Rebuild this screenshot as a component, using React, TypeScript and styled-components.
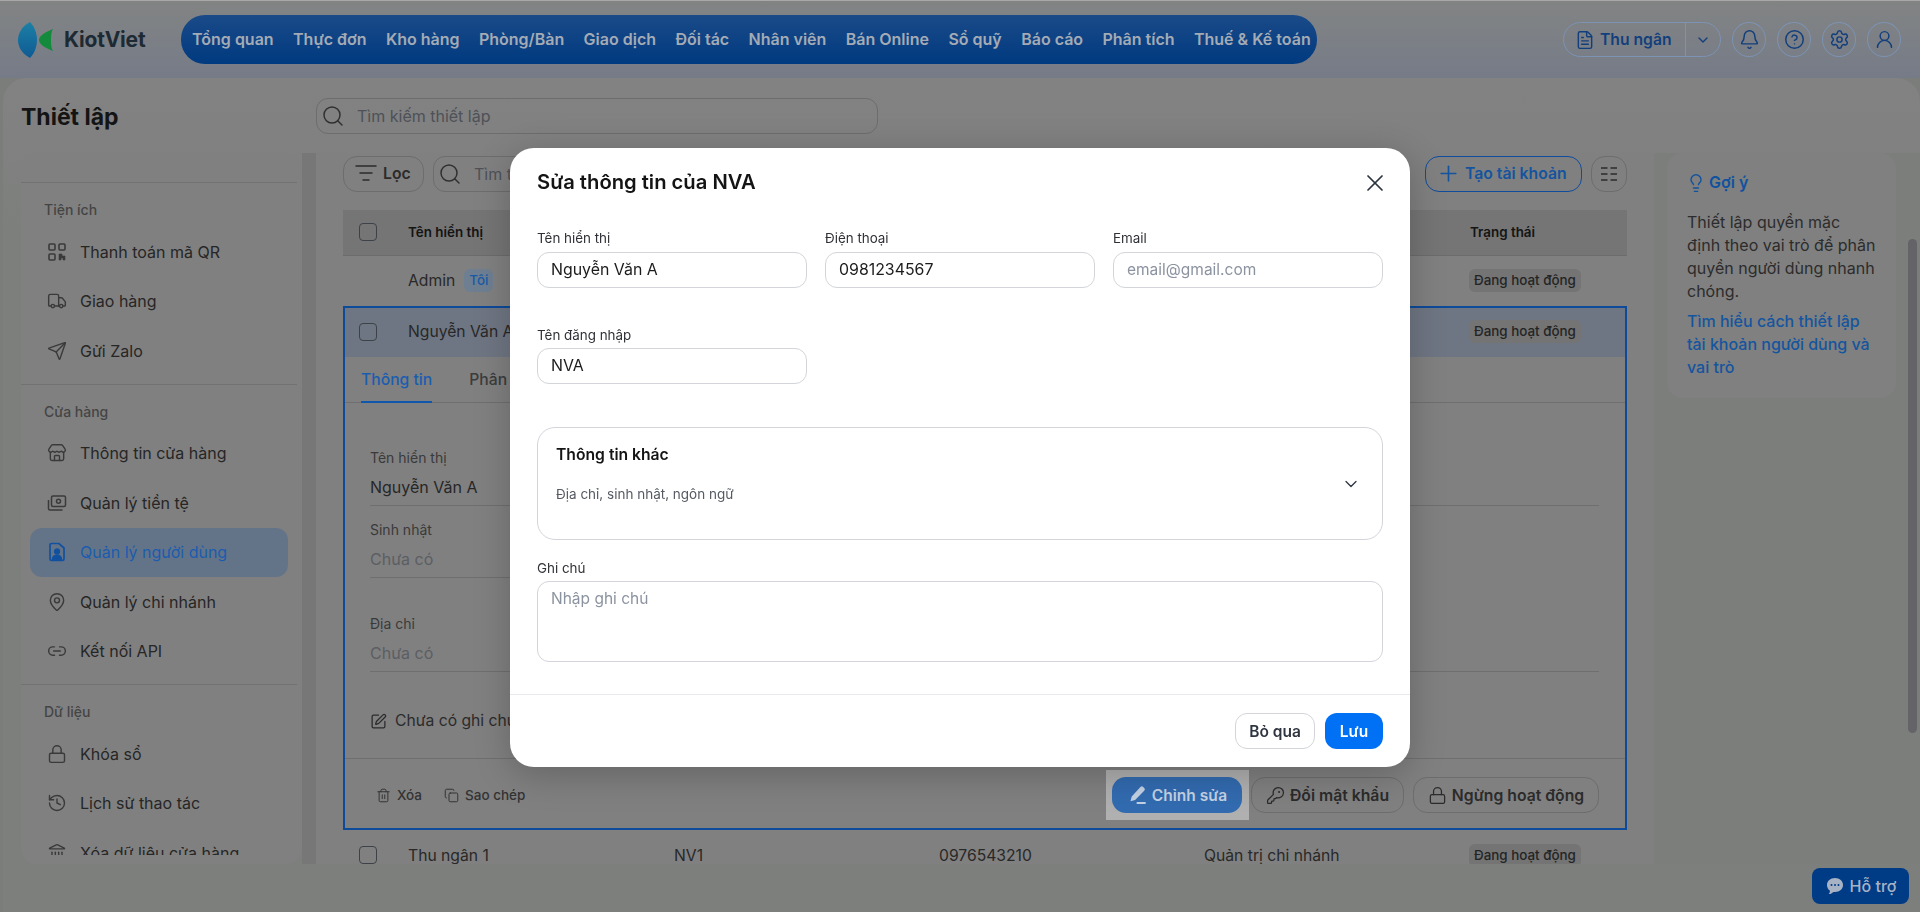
import React from "react";
import styled, { createGlobalStyle } from "styled-components";
import {
  Bell,
  ChevronDown,
  CircleHelp,
  Copy,
  FileText,
  History,
  KeyRound,
  Landmark,
  Lightbulb,
  Link2,
  ListFilter,
  Lock,
  MapPin,
  Plus,
  Search,
  Send,
  Settings,
  SquarePen,
  Store,
  Trash2,
  Truck,
  UserRound,
  X,
} from "lucide-react";

const GlobalStyle = createGlobalStyle`
  html, body {
    margin: 0;
    height: 100%;
    overflow: hidden;
    font-family: Inter, "Noto Sans", sans-serif;
  }
  * { box-sizing: border-box; }
`;

const Page = styled.div`
  height: 100vh;
  display: flex;
  flex-direction: column;
  overflow: hidden;
  background: linear-gradient(#828483, #767b88 78px, #7b7d7b 78px);
`;

const TopBar = styled.header`
  height: 78px;
  flex: none;
  display: flex;
  align-items: center;
  padding: 1px 19px 0 18px;
  box-shadow: inset 0 1px 0 #a8a8a8;
`;

const Brand = styled.div`
  width: 163px;
  flex: none;
  display: flex;
  align-items: center;
  gap: 10px;
  font-size: 21px;
  font-weight: 700;
  letter-spacing: -0.2px;
  color: #1d2a33;
`;

const Nav = styled.nav`
  width: 1136px;
  height: 49px;
  display: flex;
  align-items: center;
  gap: 19.4px;
  padding: 0 0 2px 11px;
  border-radius: 24px;
  background: linear-gradient(#1a4a88, #003a80);
`;

const NavLink = styled.a`
  font-size: 16px;
  font-weight: 600;
  color: #a4abb5;
  white-space: nowrap;
`;

const TopActions = styled.div`
  margin-left: auto;
  display: flex;
  align-items: center;
  gap: 11px;
`;

const RoleSwitch = styled.div`
  height: 35px;
  width: 158px;
  display: flex;
  align-items: center;
  border: 1px solid #7c93b3;
  border-radius: 18px;
  color: #123f7c;
  font-size: 15.7px;
  font-weight: 600;
`;

const RoleName = styled.span`
  flex: 1;
  height: 100%;
  display: flex;
  align-items: center;
  gap: 5px;
  padding-left: 11px;
  border-right: 1px solid #7c93b3;
`;

const RoleCaret = styled.span`
  width: 34px;
  display: flex;
  justify-content: center;
`;

const RoundButton = styled.button`
  width: 34px;
  height: 35px;
  padding: 0;
  display: flex;
  align-items: center;
  justify-content: center;
  border: 1px solid #7c93b3;
  border-radius: 50%;
  background: transparent;
  color: #123f7c;
`;

const Panel = styled.main`
  flex: 1;
  min-height: 0;
  margin-left: 3px;
  display: flex;
  flex-direction: column;
  border-radius: 24px 24px 0 0;
  background: linear-gradient(#828282, #7d7f7d 150px);
`;

const PanelHead = styled.div`
  height: 75px;
  flex: none;
  display: flex;
  align-items: center;
  padding: 0 0 0 18px;
`;

const PageTitle = styled.h1`
  width: 295px;
  margin: 2px 0 0;
  font-size: 23px;
  font-weight: 700;
  color: #141414;
`;

const SearchBox = styled.div<{ $width: number }>`
  width: ${(p) => p.$width}px;
  height: 36px;
  flex: none;
  display: flex;
  align-items: center;
  gap: 12px;
  padding: 0 4px;
  border: 1px solid #6d6d6d;
  border-radius: 12px;
  font-size: 16px;
  color: #4e5158;
  white-space: nowrap;
  overflow: hidden;
`;

const SearchIcon = styled(Search)`
  flex: none;
  color: #303030;
`;

const PanelBody = styled.div`
  height: 711px;
  flex: none;
  display: flex;
  overflow: hidden;
`;

const SideColumn = styled.aside`
  width: 295px;
  margin-left: 18px;
  flex: none;
  padding-right: 14px;
  background: linear-gradient(to right, transparent 281px, #777777 281px);
`;

const SideCard = styled.div`
  height: 100%;
  padding: 29px 5px 9px 0;
  border-radius: 16px;
  background: #808080;
`;

const SideScroll = styled.div`
  height: 100%;
  overflow: hidden;
`;

const SideGroup = styled.section`
  padding-bottom: 8px;
  border-top: 1px solid #727272;
`;

const SideLabel = styled.div`
  height: 20px;
  margin: 17px 0 7px 23px;
  font-size: 14px;
  line-height: 20px;
  font-weight: 500;
  color: #454545;
`;

const SideItem = styled.a<{ $active?: boolean }>`
  height: 49.5px;
  margin: 0 9px;
  display: flex;
  align-items: center;
  gap: 13px;
  padding-left: 17px;
  border-radius: 12px;
  font-size: 16px;
  color: ${(p) => (p.$active ? "#1b5cae" : "#262626")};
  background: ${(p) => (p.$active ? "#647488" : "transparent")};
  svg {
    flex: none;
    color: ${(p) => (p.$active ? "#11519f" : "#3a3a3a")};
  }
`;

const Content = styled.section`
  width: 1338px;
  flex: none;
  padding: 3px 27px 0;
  background: #808080;
  overflow: hidden;
`;

const Toolbar = styled.div`
  height: 36px;
  display: flex;
  align-items: center;
  gap: 9px;
  margin-bottom: 18px;
`;

const GhostButton = styled.button`
  height: 36px;
  display: flex;
  align-items: center;
  gap: 5px;
  padding: 0 0 2px 10px;
  border: 1px solid #6d6d6d;
  border-radius: 14px;
  background: transparent;
  font: 600 15.75px Inter, sans-serif;
  color: #2b2b2b;
  white-space: nowrap;
`;

const FilterButton = styled(GhostButton)`
  width: 81px;
`;

const CreateButton = styled(GhostButton)`
  margin-left: auto;
  width: 157px;
  gap: 4px;
  border-color: #0f4c9c;
  color: #14549f;
`;

const SquareButton = styled(GhostButton)`
  width: 36px;
  padding: 0;
  justify-content: center;
`;

const TableRow = styled.div<{ $head?: boolean; $raised?: boolean; $height: number }>`
  height: ${(p) => p.$height}px;
  display: grid;
  grid-template-columns: 65px 266px 265px 265px 266px 1fr;
  align-items: center;
  padding-bottom: ${(p) => (p.$raised ? 2 : 0)}px;
  font-size: ${(p) => (p.$head ? 13.4 : 15.7)}px;
  font-weight: ${(p) => (p.$head ? 600 : 400)};
  color: ${(p) => (p.$head ? "#141414" : "#282828")};
  background: ${(p) => (p.$head ? "#757575" : "transparent")};
  border-bottom: ${(p) => (p.$head ? "1px solid #6c6c6c" : "none")};
`;

const SelectedHead = styled(TableRow)`
  grid-template-columns: 63px 266px 265px 265px 266px 1fr;
  background: #6f7683;
`;

const Check = styled.span`
  width: 18px;
  height: 18px;
  margin-left: 16px;
  display: block;
  border: 1px solid #3d4148;
  border-radius: 4px;
`;

const SelectedCheck = styled(Check)`
  margin-left: 14px;
`;

const NameCell = styled.span`
  display: flex;
  align-items: center;
  gap: 9px;
`;

const Chip = styled.span`
  padding: 3px 5px;
  border-radius: 6px;
  background: #6f7f92;
  font-size: 13.4px;
  line-height: 17px;
  font-weight: 500;
  color: #1a5aa5;
`;

const StatusPill = styled.span`
  justify-self: start;
  margin-left: -1px;
  padding: 3px 5px;
  border-radius: 6px;
  background: #747474;
  font-size: 13.4px;
  line-height: 17px;
  font-weight: 500;
  color: #242424;
`;

const SelectedBox = styled.div`
  border: 2px solid #0d4a99;
`;

const Tabs = styled.div`
  height: 46px;
  display: flex;
  gap: 37px;
  padding-left: 16px;
  border-bottom: 1px solid #6f6f6f;
`;

const Tab = styled.a<{ $active?: boolean }>`
  height: 46px;
  display: flex;
  align-items: center;
  font-size: 15.7px;
  font-weight: 500;
  color: ${(p) => (p.$active ? "#1a5db0" : "#3c3c3c")};
  border-bottom: 2px solid ${(p) => (p.$active ? "#0f57ad" : "transparent")};
`;

const DetailPane = styled.div`
  height: 355px;
  padding: 45px 0 0 25px;
`;

const DetailField = styled.div<{ $gap: number; $half?: boolean }>`
  width: ${(p) => (p.$half ? 600 : 1229)}px;
  height: 58px;
  margin-bottom: ${(p) => p.$gap}px;
  border-bottom: 1px solid #6f6f6f;
`;

const DetailLabel = styled.div`
  height: 20px;
  font-size: 14px;
  line-height: 20px;
  color: #3a3a3a;
`;

const DetailValue = styled.div<{ $muted?: boolean }>`
  margin-top: 8px;
  font-size: 16px;
  line-height: 22px;
  color: ${(p) => (p.$muted ? "#5b5e63" : "#272727")};
`;

const NoteLine = styled.div`
  margin-top: 39px;
  display: flex;
  align-items: center;
  gap: 8px;
  font-size: 15.7px;
  line-height: 20px;
  color: #2b2b2b;
`;

const ActionBar = styled.div`
  height: 70px;
  display: flex;
  align-items: center;
  padding: 3px 26px 0 31px;
  border-top: 1px solid #6f6f6f;
`;

const TextAction = styled.span`
  display: flex;
  align-items: center;
  gap: 6px;
  margin-right: 22px;
  font-size: 13.5px;
  font-weight: 500;
  color: #333333;
`;

const Spotlight = styled.div`
  margin: 0 2px 0 auto;
  padding: 7px 7px 7px 6px;
  background: #b0b0b0;
`;

const EditButton = styled.button`
  width: 130px;
  height: 36px;
  display: flex;
  align-items: center;
  justify-content: center;
  gap: 4px;
  border: 0;
  border-radius: 14px;
  background: #326bb0;
  font: 600 15.5px Inter, sans-serif;
  color: #c3d1e4;
`;

const OutlineAction = styled(GhostButton)<{ $width: number }>`
  width: ${(p) => p.$width}px;
  margin-left: ${(p) => (p.$width > 160 ? 9 : 0)}px;
  padding: 0;
  justify-content: center;
`;

const HintColumn = styled.aside`
  flex: 1;
  padding: 0 24px 0 13px;
  background: #7c7e7c;
`;

const HintCard = styled.div`
  height: 245px;
  padding: 17px 19px 0 20px;
  border-radius: 16px;
  background: #808080;
  font-size: 16px;
  line-height: 23px;
  color: #2c2c2c;
`;

const HintTitle = styled.div`
  display: flex;
  align-items: center;
  gap: 3px;
  margin: 1px 0 17px -1px;
  font-weight: 600;
  color: #11529f;
`;

const HintLink = styled.a`
  display: block;
  margin-top: 7px;
  font-weight: 500;
  color: #14559f;
`;

const Scrollbar = styled.div`
  position: fixed;
  top: 239px;
  right: 3px;
  width: 9px;
  height: 494px;
  border-radius: 5px;
  background: #646468;
`;

const SupportButton = styled.button`
  position: fixed;
  right: 11px;
  bottom: 8px;
  width: 97px;
  height: 36px;
  display: flex;
  align-items: center;
  justify-content: center;
  gap: 5px;
  border: 0;
  border-radius: 8px;
  background: #003c85;
  font: 500 16px Inter, sans-serif;
  color: #a7b2c4;
`;

const Backdrop = styled.div`
  position: fixed;
  inset: 0;
  display: flex;
  justify-content: center;
  align-items: flex-start;
  padding-top: 148px;
`;

const Modal = styled.div`
  width: 900px;
  height: 619px;
  display: flex;
  flex-direction: column;
  border-radius: 24px;
  background: #ffffff;
  box-shadow: 0 8px 36px rgba(0, 0, 0, 0.22);
`;

const ModalHead = styled.div`
  height: 82px;
  flex: none;
  display: flex;
  align-items: flex-start;
  justify-content: space-between;
  padding: 20px 27px 0;
`;

const ModalTitle = styled.h2`
  margin: 0;
  font-size: 20.2px;
  line-height: 28px;
  font-weight: 600;
  color: #141414;
`;

const CloseButton = styled.button`
  width: 28px;
  height: 28px;
  margin: 1px -6px 0 0;
  padding: 0;
  display: flex;
  align-items: center;
  justify-content: center;
  border: 0;
  background: transparent;
  color: #2c3440;
`;

const ModalBody = styled.div`
  flex: 1;
  padding: 0 27px;
`;

const FieldGrid = styled.div`
  display: grid;
  grid-template-columns: repeat(3, 270px);
  gap: 18px;
  margin-bottom: 39px;
`;

const Field = styled.label`
  display: block;
`;

const FieldLabel = styled.div<{ $gap?: number }>`
  height: 16px;
  margin-bottom: ${(p) => p.$gap ?? 6}px;
  font-size: 13.4px;
  line-height: 16px;
  color: #2f3136;
`;

const Input = styled.input`
  width: 100%;
  height: 36px;
  padding: 0 13px 2px;
  border: 1px solid #d3d5da;
  border-radius: 12px;
  outline: none;
  font: 400 15.9px Inter, sans-serif;
  color: #1c1c1c;
  &::placeholder {
    color: #8c93a0;
    font-size: 15.5px;
  }
`;

const Accordion = styled.div`
  height: 113px;
  margin: 43px 0 20px;
  display: flex;
  align-items: center;
  justify-content: space-between;
  padding: 0 21px 0 18px;
  border: 1px solid #d3d5da;
  border-radius: 18px;
`;

const AccordionText = styled.div`
  align-self: flex-start;
  padding-top: 16px;
`;

const AccordionTitle = styled.div`
  margin-bottom: 18px;
  font-size: 15.7px;
  line-height: 22px;
  font-weight: 600;
  color: #141414;
`;

const AccordionHint = styled.div`
  font-size: 13.5px;
  line-height: 20px;
  color: #555a63;
`;

const NoteArea = styled.textarea`
  width: 100%;
  height: 81px;
  display: block;
  padding: 6px 13px;
  resize: none;
  border: 1px solid #d3d5da;
  border-radius: 12px;
  outline: none;
  font: 400 15.5px/22px Inter, sans-serif;
  &::placeholder {
    color: #8c93a0;
  }
`;

const ModalFoot = styled.div`
  height: 73px;
  flex: none;
  display: flex;
  justify-content: flex-end;
  align-items: center;
  gap: 10px;
  padding: 0 27px;
  border-top: 1px solid #e8e9ec;
`;

const CancelButton = styled.button`
  width: 80px;
  height: 36px;
  border: 1px solid #d3d5da;
  border-radius: 12px;
  background: #ffffff;
  font: 600 15.5px Inter, sans-serif;
  color: #2f3540;
`;

const SaveButton = styled.button`
  width: 58px;
  height: 36px;
  border: 0;
  border-radius: 12px;
  background: #0070f4;
  font: 600 15.5px Inter, sans-serif;
  color: #ffffff;
`;

const LogoMark = () => (
  <svg width="36" height="36" viewBox="0 0 36 36">
    <defs>
      <linearGradient id="lens" x1="0" y1="0" x2="0" y2="1">
        <stop offset="0" stopColor="#1c80a5" />
        <stop offset="1" stopColor="#0e5a94" />
      </linearGradient>
    </defs>
    <path d="M12 0C3 5 0 12 0 18s3 13 12 18c4-4 7-11 7-18S16 4 12 0z" fill="url(#lens)" />
    <path d="M35 7c-8 3-14 7-14 11s6 8 14 11c-2-3-2-7-2-11s0-8 2-11z" fill="#148a3c" />
  </svg>
);

const QrIcon = () => (
  <svg width="20" height="20" viewBox="0 0 20 20" fill="none" stroke="currentColor" strokeWidth="1.6">
    <rect x="2" y="2" width="6" height="6" rx="1" />
    <rect x="12" y="2" width="6" height="6" rx="1" />
    <rect x="2" y="12" width="6" height="6" rx="1" />
    <path d="M12 18v-6h3v2h3v4h-2v-2h-2v2z" fill="currentColor" strokeWidth="0.6" />
  </svg>
);

const MoneyIcon = () => (
  <svg width="20" height="20" viewBox="0 0 20 20" fill="none" stroke="currentColor" strokeWidth="1.5">
    <rect x="4.5" y="3" width="14" height="10.5" rx="1.5" />
    <circle cx="11.5" cy="8.2" r="2" />
    <path d="M1.5 7v8.500a1.500 1.500 0 0 0 1.500 1.500h12.500" />
  </svg>
);

const UserFileIcon = () => (
  <svg width="20" height="20" viewBox="0 0 20 20" fill="none" stroke="currentColor" strokeWidth="1.7">
    <path d="M3 3a1.500 1.500 0 0 1 1.500-1.500H12L17 6v11a1.500 1.500 0 0 1-1.500 1.500h-11A1.500 1.500 0 0 1 3 17z" />
    <circle cx="10" cy="9.500" r="2.300" fill="currentColor" />
    <path d="M5.500 17.500c.3-3 2-4.200 4.500-4.200s4.200 1.200 4.500 4.200z" fill="currentColor" />
  </svg>
);

const ColumnsIcon = () => (
  <svg width="18" height="18" viewBox="0 0 18 18" stroke="currentColor" strokeWidth="1.5">
    <path d="M1 3h6.500M10.500 3H17M1 9h6.500M10.500 9H17M1 15h6.500M10.500 15H17" />
  </svg>
);

const PenLineIcon = () => (
  <svg width="21" height="21" viewBox="0 0 20 20" fill="currentColor">
    <path d="M12.800 1.800a1.800 1.800 0 0 1 2.600 0l1 1a1.800 1.800 0 0 1 0 2.600l-8.700 8.800-4.400 1.300 1.200-4.600z" />
    <rect x="9" y="16.300" width="9" height="1.700" rx="0.800" />
  </svg>
);

const ChatIcon = () => (
  <svg width="20" height="20" viewBox="0 0 20 20">
    <path d="M10 2c4.700 0 8 3 8 7s-3.300 7-8 7c-.6 0-1.100 0-1.600-.1C7 17.300 5.300 18.200 3.800 18c.8-.9 1.200-2 1.200-3.200C3.100 13.500 2 11.400 2 9c0-4 3.300-7 8-7z" fill="currentColor" />
    <circle cx="6.500" cy="9" r="1" fill="#003c85" />
    <circle cx="10" cy="9" r="1" fill="#003c85" />
    <circle cx="13.500" cy="9" r="1" fill="#003c85" />
  </svg>
);

const navItems = [
  "Tổng quan",
  "Thực đơn",
  "Kho hàng",
  "Phòng/Bàn",
  "Giao dịch",
  "Đối tác",
  "Nhân viên",
  "Bán Online",
  "Sổ quỹ",
  "Báo cáo",
  "Phân tích",
  "Thuế & Kế toán",
];

const sideGroups = [
  {
    label: "Tiện ích",
    items: [
      { text: "Thanh toán mã QR", icon: <QrIcon /> },
      { text: "Giao hàng", icon: <Truck size={20} strokeWidth={1.7} /> },
      { text: "Gửi Zalo", icon: <Send size={20} strokeWidth={1.7} /> },
    ],
  },
  {
    label: "Cửa hàng",
    items: [
      { text: "Thông tin cửa hàng", icon: <Store size={20} strokeWidth={1.7} /> },
      { text: "Quản lý tiền tệ", icon: <MoneyIcon /> },
      { text: "Quản lý người dùng", icon: <UserFileIcon />, active: true },
      { text: "Quản lý chi nhánh", icon: <MapPin size={20} strokeWidth={1.7} /> },
      { text: "Kết nối API", icon: <Link2 size={20} strokeWidth={1.7} /> },
    ],
  },
  {
    label: "Dữ liệu",
    items: [
      { text: "Khóa sổ", icon: <Lock size={20} strokeWidth={1.7} /> },
      { text: "Lịch sử thao tác", icon: <History size={20} strokeWidth={1.7} /> },
      { text: "Xóa dữ liệu cửa hàng", icon: <Landmark size={20} strokeWidth={1.7} /> },
    ],
  },
];

export default function App() {
  return (
    <Page>
      <GlobalStyle />
      <TopBar>
        <Brand>
          <LogoMark />
          KiotViet
        </Brand>
        <Nav>
          {navItems.map((item) => (
            <NavLink key={item}>{item}</NavLink>
          ))}
        </Nav>
        <TopActions>
          <RoleSwitch>
            <RoleName>
              <FileText size={20} strokeWidth={1.7} />
              Thu ngân
            </RoleName>
            <RoleCaret>
              <ChevronDown size={16} />
            </RoleCaret>
          </RoleSwitch>
          <RoundButton>
            <Bell size={21} strokeWidth={1.7} />
          </RoundButton>
          <RoundButton>
            <CircleHelp size={21} strokeWidth={1.7} />
          </RoundButton>
          <RoundButton>
            <Settings size={21} strokeWidth={1.7} />
          </RoundButton>
          <RoundButton>
            <UserRound size={21} strokeWidth={1.7} />
          </RoundButton>
        </TopActions>
      </TopBar>

      <Panel>
        <PanelHead>
          <PageTitle>Thiết lập</PageTitle>
          <SearchBox $width={562}>
            <SearchIcon size={24} strokeWidth={1.5} />
            Tìm kiếm thiết lập
          </SearchBox>
        </PanelHead>

        <PanelBody>
          <SideColumn>
            <SideCard>
              <SideScroll>
                {sideGroups.map((group) => (
                  <SideGroup key={group.label}>
                    <SideLabel>{group.label}</SideLabel>
                    {group.items.map((item) => (
                      <SideItem key={item.text} $active={item.active}>
                        {item.icon}
                        {item.text}
                      </SideItem>
                    ))}
                  </SideGroup>
                ))}
              </SideScroll>
            </SideCard>
          </SideColumn>

          <Content>
            <Toolbar>
              <FilterButton>
                <ListFilter size={24} strokeWidth={1.5} />
                Lọc
              </FilterButton>
              <SearchBox $width={300}>
                <SearchIcon size={24} strokeWidth={1.5} />
                Tìm t
              </SearchBox>
              <CreateButton>
                <Plus size={25} strokeWidth={1.6} />
                Tạo tài khoản
              </CreateButton>
              <SquareButton>
                <ColumnsIcon />
              </SquareButton>
            </Toolbar>

            <TableRow $head $raised $height={46}>
              <Check />
              <span>Tên hiển thị</span>
              <span />
              <span />
              <span />
              <span>Trạng thái</span>
            </TableRow>
            <TableRow $raised $height={50}>
              <span />
              <NameCell>
                Admin <Chip>Tôi</Chip>
              </NameCell>
              <span />
              <span />
              <span />
              <StatusPill>Đang hoạt động</StatusPill>
            </TableRow>

            <SelectedBox>
              <SelectedHead $raised $height={49}>
                <SelectedCheck />
                <span>Nguyễn Văn A</span>
                <span />
                <span />
                <span />
                <StatusPill>Đang hoạt động</StatusPill>
              </SelectedHead>
              <Tabs>
                <Tab $active>Thông tin</Tab>
                <Tab>Phân quyền</Tab>
              </Tabs>
              <DetailPane>
                <DetailField $gap={14}>
                  <DetailLabel>Tên hiển thị</DetailLabel>
                  <DetailValue>Nguyễn Văn A</DetailValue>
                </DetailField>
                <DetailField $gap={36} $half>
                  <DetailLabel>Sinh nhật</DetailLabel>
                  <DetailValue $muted>Chưa có</DetailValue>
                </DetailField>
                <DetailField $gap={0}>
                  <DetailLabel>Địa chỉ</DetailLabel>
                  <DetailValue $muted>Chưa có</DetailValue>
                </DetailField>
                <NoteLine>
                  <SquarePen size={17} strokeWidth={1.8} />
                  Chưa có ghi chú
                </NoteLine>
              </DetailPane>
              <ActionBar>
                <TextAction>
                  <Trash2 size={15} strokeWidth={1.6} />
                  Xóa
                </TextAction>
                <TextAction>
                  <Copy size={15} strokeWidth={1.6} />
                  Sao chép
                </TextAction>
                <Spotlight>
                  <EditButton>
                    <PenLineIcon />
                    Chỉnh sửa
                  </EditButton>
                </Spotlight>
                <OutlineAction $width={153}>
                  <KeyRound size={19} strokeWidth={1.6} />
                  Đổi mật khẩu
                </OutlineAction>
                <OutlineAction $width={186}>
                  <Lock size={19} strokeWidth={1.6} />
                  Ngừng hoạt động
                </OutlineAction>
              </ActionBar>
            </SelectedBox>

            <TableRow $height={50}>
              <Check />
              <span>Thu ngân 1</span>
              <span>NV1</span>
              <span>0976543210</span>
              <span>Quản trị chi nhánh</span>
              <StatusPill>Đang hoạt động</StatusPill>
            </TableRow>
          </Content>

          <HintColumn>
            <HintCard>
              <HintTitle>
                <Lightbulb size={20} strokeWidth={1.7} />
                Gợi ý
              </HintTitle>
              Thiết lập quyền mặc định theo vai trò để phân quyền người dùng nhanh chóng.
              <HintLink>Tìm hiểu cách thiết lập tài khoản người dùng và vai trò</HintLink>
            </HintCard>
          </HintColumn>
        </PanelBody>
      </Panel>

      <Scrollbar />
      <SupportButton>
        <ChatIcon />
        Hỗ trợ
      </SupportButton>

      <Backdrop>
        <Modal>
          <ModalHead>
            <ModalTitle>Sửa thông tin của NVA</ModalTitle>
            <CloseButton>
              <X size={28} strokeWidth={1.5} />
            </CloseButton>
          </ModalHead>
          <ModalBody>
            <FieldGrid>
              <Field>
                <FieldLabel>Tên hiển thị</FieldLabel>
                <Input defaultValue="Nguyễn Văn A" />
              </Field>
              <Field>
                <FieldLabel>Điện thoại</FieldLabel>
                <Input defaultValue="0981234567" />
              </Field>
              <Field>
                <FieldLabel>Email</FieldLabel>
                <Input placeholder="email@gmail.com" />
              </Field>
            </FieldGrid>
            <FieldGrid>
              <Field>
                <FieldLabel $gap={5}>Tên đăng nhập</FieldLabel>
                <Input defaultValue="NVA" />
              </Field>
            </FieldGrid>
            <Accordion>
              <AccordionText>
                <AccordionTitle>Thông tin khác</AccordionTitle>
                <AccordionHint>Địa chỉ, sinh nhật, ngôn ngữ</AccordionHint>
              </AccordionText>
              <ChevronDown size={20} strokeWidth={1.5} color="#2c3440" />
            </Accordion>
            <Field>
              <FieldLabel $gap={5}>Ghi chú</FieldLabel>
              <NoteArea placeholder="Nhập ghi chú" />
            </Field>
          </ModalBody>
          <ModalFoot>
            <CancelButton>Bỏ qua</CancelButton>
            <SaveButton>Lưu</SaveButton>
          </ModalFoot>
        </Modal>
      </Backdrop>
    </Page>
  );
}
